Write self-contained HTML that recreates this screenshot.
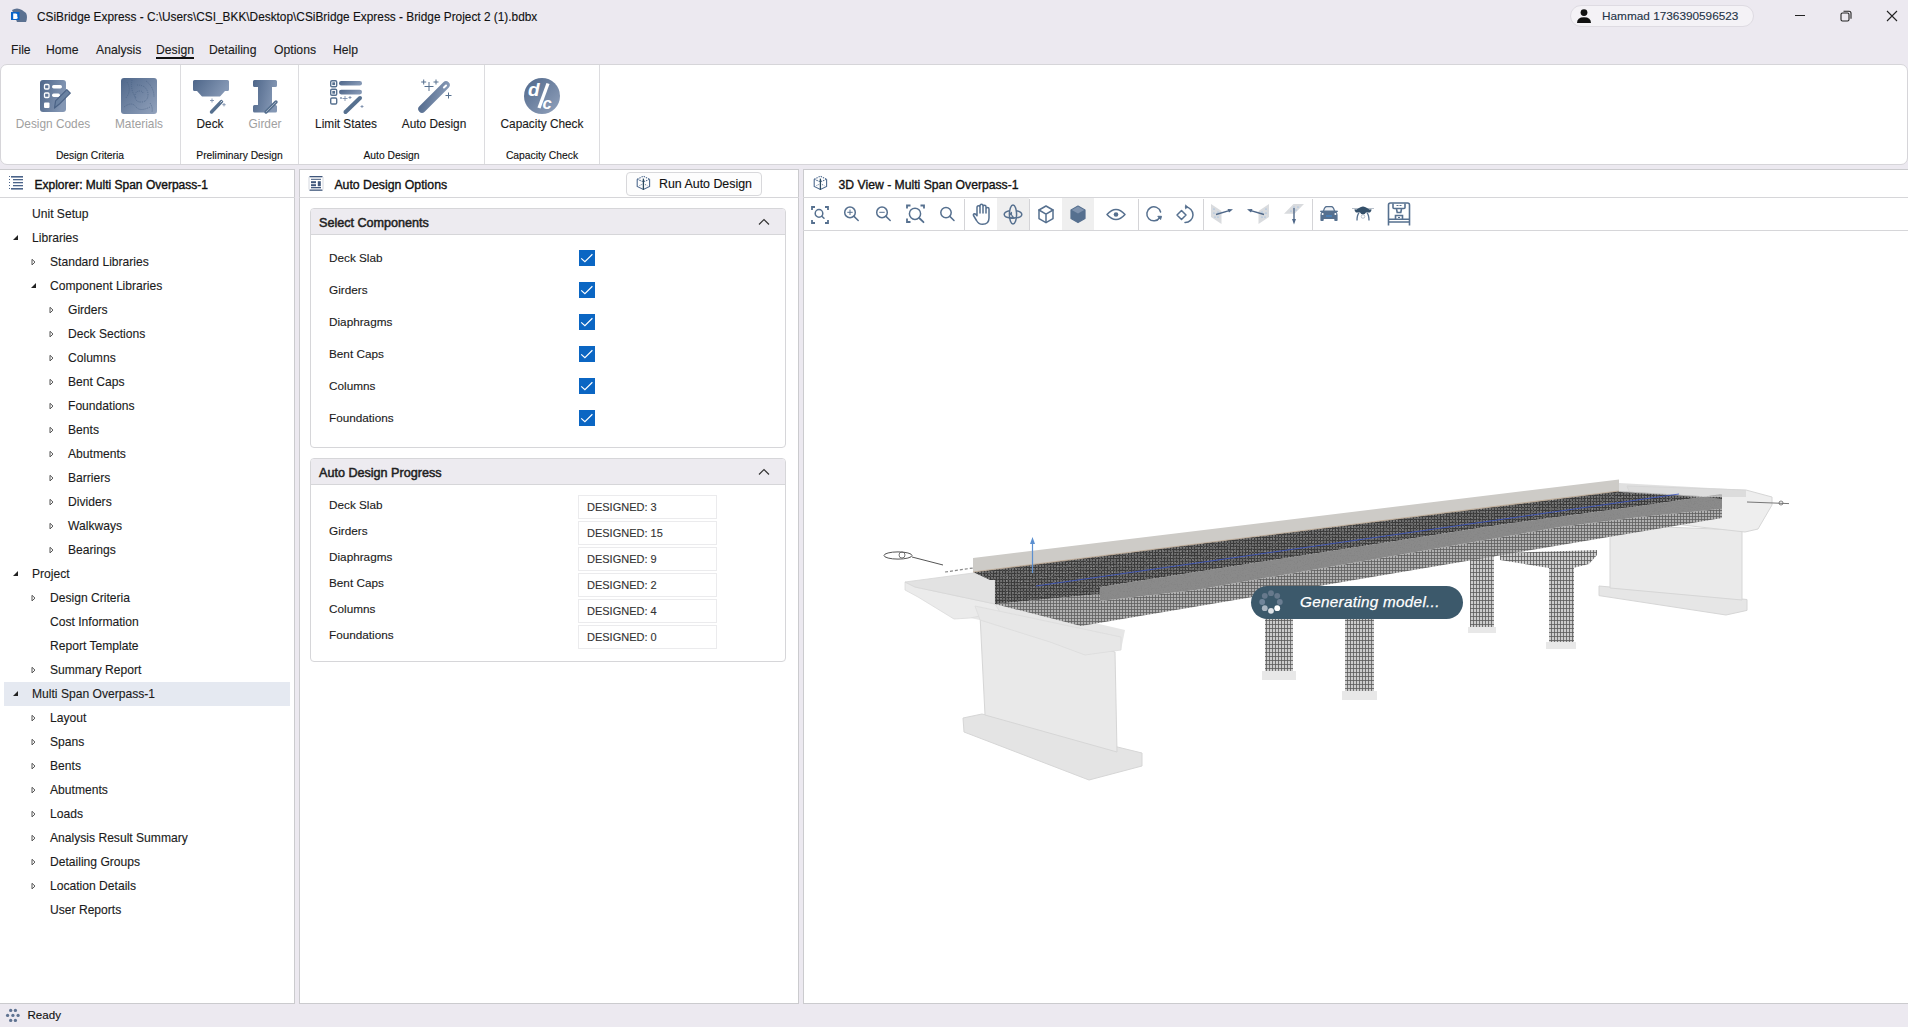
<!DOCTYPE html>
<html><head><meta charset="utf-8"><style>*{box-sizing:border-box;margin:0;padding:0}
html,body{width:1908px;height:1027px;overflow:hidden;background:#ece9f0;font-family:"Liberation Sans",sans-serif;color:#1b1b1b}
.a{position:absolute;white-space:nowrap}
svg.a{overflow:visible}</style></head><body>
<svg class="a" style="left:9px;top:7px" width="20" height="17" viewBox="0 0 20 17"><path d="M3 3 Q8 0 13 3 L17 6 Q19 10 17 15 L8 15 Z" fill="#5b7191"/>
<rect x="2" y="5" width="8.5" height="8" fill="#0a64c8"/><path d="M4.2 6.5h2.6q1.6 0 1.6 1.5q0 .8-.7 1.1q1 .3 1 1.3q0 1.6-1.8 1.6H4.2z" fill="#fff"/></svg>
<div class="a" style="left:37px;top:12.21px;font-size:11.85px;line-height:11.85px;color:#111;font-weight:normal;font-style:normal;;-webkit-text-stroke:0.12px #111">CSiBridge Express - C:\Users\CSI_BKK\Desktop\CSiBridge Express - Bridge Project 2 (1).bdbx</div>
<div class="a" style="left:1570px;top:5px;width:184px;height:22px;background:#f4f2f6;border:1px solid #dedbe2;border-radius:11px"></div>
<svg class="a" style="left:1576px;top:9px" width="16" height="14" viewBox="0 0 16 14"><circle cx="8" cy="3.6" r="3.4" fill="#111"/><path d="M1 14 Q1 8.2 8 8.2 Q15 8.2 15 14 Z" fill="#111"/></svg>
<div class="a" style="left:1602px;top:11.41px;font-size:11.8px;line-height:11.8px;color:#243447;font-weight:normal;font-style:normal;;-webkit-text-stroke:0.12px #243447">Hammad 1736390596523</div>
<div class="a" style="left:1795px;top:15px;width:10px;height:1px;background:#222"></div>
<svg class="a" style="left:1840px;top:10px" width="12" height="12" viewBox="0 0 12 12"><rect x="1" y="3" width="8" height="8" rx="1.5" fill="none" stroke="#222" stroke-width="1.1"/><path d="M3.5 1.2h5.5q2 0 2 2v5.5" fill="none" stroke="#222" stroke-width="1.1"/></svg>
<svg class="a" style="left:1886px;top:10px" width="12" height="12" viewBox="0 0 12 12"><path d="M1 1L11 11M11 1L1 11" stroke="#222" stroke-width="1.1"/></svg>
<div class="a" style="left:11px;top:44.07px;font-size:12.2px;line-height:12.2px;color:#1b1b1b;font-weight:normal;font-style:normal;;-webkit-text-stroke:0.12px #1b1b1b">File</div>
<div class="a" style="left:46px;top:44.07px;font-size:12.2px;line-height:12.2px;color:#1b1b1b;font-weight:normal;font-style:normal;;-webkit-text-stroke:0.12px #1b1b1b">Home</div>
<div class="a" style="left:96px;top:44.07px;font-size:12.2px;line-height:12.2px;color:#1b1b1b;font-weight:normal;font-style:normal;;-webkit-text-stroke:0.12px #1b1b1b">Analysis</div>
<div class="a" style="left:156px;top:44.07px;font-size:12.2px;line-height:12.2px;color:#1b1b1b;font-weight:normal;font-style:normal;;-webkit-text-stroke:0.12px #1b1b1b">Design</div>
<div class="a" style="left:209px;top:44.07px;font-size:12.2px;line-height:12.2px;color:#1b1b1b;font-weight:normal;font-style:normal;;-webkit-text-stroke:0.12px #1b1b1b">Detailing</div>
<div class="a" style="left:274px;top:44.07px;font-size:12.2px;line-height:12.2px;color:#1b1b1b;font-weight:normal;font-style:normal;;-webkit-text-stroke:0.12px #1b1b1b">Options</div>
<div class="a" style="left:333px;top:44.07px;font-size:12.2px;line-height:12.2px;color:#1b1b1b;font-weight:normal;font-style:normal;;-webkit-text-stroke:0.12px #1b1b1b">Help</div>
<div class="a" style="left:156px;top:57px;width:38px;height:2px;background:#111"></div>
<div class="a" style="left:0px;top:64px;width:1908px;height:101px;background:#fff;border:1px solid #d6d5d9;border-radius:7px"></div>
<div class="a" style="left:180px;top:65px;width:1px;height:99px;background:#dcdcdf"></div>
<div class="a" style="left:298px;top:65px;width:1px;height:99px;background:#dcdcdf"></div>
<div class="a" style="left:484px;top:65px;width:1px;height:99px;background:#dcdcdf"></div>
<div class="a" style="left:599px;top:65px;width:1px;height:99px;background:#dcdcdf"></div>
<div class="a" style="left:-97px;width:300px;text-align:center;top:119.11px;font-size:11.85px;line-height:11.85px;color:#a0a0a0;font-weight:normal;">Design Codes</div>
<div class="a" style="left:-11px;width:300px;text-align:center;top:119.11px;font-size:11.85px;line-height:11.85px;color:#a0a0a0;font-weight:normal;">Materials</div>
<div class="a" style="left:60px;width:300px;text-align:center;top:119.11px;font-size:11.85px;line-height:11.85px;color:#1b1b1b;font-weight:normal;;-webkit-text-stroke:0.12px #1b1b1b">Deck</div>
<div class="a" style="left:115px;width:300px;text-align:center;top:119.11px;font-size:11.85px;line-height:11.85px;color:#a0a0a0;font-weight:normal;">Girder</div>
<div class="a" style="left:196px;width:300px;text-align:center;top:119.11px;font-size:11.85px;line-height:11.85px;color:#1b1b1b;font-weight:normal;;-webkit-text-stroke:0.12px #1b1b1b">Limit States</div>
<div class="a" style="left:284px;width:300px;text-align:center;top:119.11px;font-size:11.85px;line-height:11.85px;color:#1b1b1b;font-weight:normal;;-webkit-text-stroke:0.12px #1b1b1b">Auto Design</div>
<div class="a" style="left:392px;width:300px;text-align:center;top:119.11px;font-size:11.85px;line-height:11.85px;color:#1b1b1b;font-weight:normal;;-webkit-text-stroke:0.12px #1b1b1b">Capacity Check</div>
<div class="a" style="left:-60px;width:300px;text-align:center;top:150.79px;font-size:10.3px;line-height:10.3px;color:#111;font-weight:normal;;-webkit-text-stroke:0.12px #111">Design Criteria</div>
<div class="a" style="left:89.5px;width:300px;text-align:center;top:150.79px;font-size:10.3px;line-height:10.3px;color:#111;font-weight:normal;;-webkit-text-stroke:0.12px #111">Preliminary Design</div>
<div class="a" style="left:241.5px;width:300px;text-align:center;top:150.79px;font-size:10.3px;line-height:10.3px;color:#111;font-weight:normal;;-webkit-text-stroke:0.12px #111">Auto Design</div>
<div class="a" style="left:392px;width:300px;text-align:center;top:150.79px;font-size:10.3px;line-height:10.3px;color:#111;font-weight:normal;;-webkit-text-stroke:0.12px #111">Capacity Check</div>
<svg class="a" style="left:0px;top:0px" width="1" height="1" viewBox="0 0 1 1"><defs><linearGradient id="g1" x1="0" y1="0" x2="1" y2="0.3"><stop offset="0" stop-color="#4e6689"/><stop offset="1" stop-color="#8497b4"/></linearGradient>
<linearGradient id="g2" x1="0" y1="0" x2="1" y2="1"><stop offset="0" stop-color="#4f678a"/><stop offset="1" stop-color="#93a3bd"/></linearGradient></defs></svg>
<svg class="a" style="left:39px;top:79px" width="33" height="35" viewBox="0 0 33 35"><rect x="1" y="1" width="26" height="32" rx="3" fill="url(#g1)"/>
<rect x="5.5" y="5.5" width="4.5" height="4.5" rx="1" fill="none" stroke="#fff" stroke-width="1.3"/>
<rect x="5.5" y="14" width="4.5" height="4.5" rx="1" fill="none" stroke="#fff" stroke-width="1.3"/>
<rect x="5" y="23.5" width="5.5" height="5.5" rx="1" fill="#fff"/>
<rect x="13" y="6" width="10" height="3.5" rx="1.7" fill="#fff"/><rect x="13" y="14.5" width="8" height="3.5" rx="1.7" fill="#fff"/>
<path d="M15.5 29 L16.6 21.8 L27.8 10.6 L31.3 14.1 L20.1 25.3 Z" fill="#6a82a2" stroke="#4a6285" stroke-width="1.2" stroke-linejoin="round"/></svg>
<svg class="a" style="left:120px;top:77px" width="38" height="38" viewBox="0 0 38 38"><rect x="1" y="1" width="36" height="36" rx="3" fill="url(#g2)"/>
<g fill="none" stroke="#4a6284" stroke-width="0.9" stroke-dasharray="1 1" opacity="0.75"><path d="M17 8 q10 0 11 9 q0 8 -7 8 q-6 0 -6 -6 q0 -5 5 -5 q3 0 3 3"/><path d="M4 30 q8 -6 12 0 q4 5 14 0"/><path d="M7 5 q5 8 -1 16"/><path d="M26 4 q8 6 8 16"/><path d="M12 3 q-2 10 4 18"/><path d="M30 26 q3 4 2 9"/></g></svg>
<svg class="a" style="left:192px;top:79px" width="38" height="36" viewBox="0 0 38 36"><path d="M1 2.5 Q1 1 2.5 1 H35.5 Q37 1 37 2.5 V10.5 Q37 12 35.5 12 H33 L28.5 17 Q28 17.5 27 17.5 H11 Q10 17.5 9.5 17 L5 12 H2.5 Q1 12 1 10.5 Z" fill="url(#g1)"/>
<path d="M19.5 33 L29.5 22.5" stroke="#56708f" stroke-width="3.4" stroke-linecap="round"/><path d="M28.5 23.5 L30.5 21.5" stroke="#fff" stroke-width="0.8"/>
<g stroke="#7d90ad" stroke-width="0.9"><path d="M20 19.5v4M18 21.5h4M32 24v3.4M30.3 25.7h3.4"/></g></svg>
<svg class="a" style="left:252px;top:79px" width="28" height="35" viewBox="0 0 28 35"><path d="M2.5 1 H23.5 Q25 1 25 2.5 V6.5 Q25 8 23.5 8 H20 V26 H23.5 Q25 26 25 27.5 V32 Q25 33.5 23.5 33.5 H2.5 Q1 33.5 1 32 V27.5 Q1 26 2.5 26 H6 V8 H2.5 Q1 8 1 6.5 V2.5 Q1 1 2.5 1 Z" fill="url(#g1)"/>
<path d="M14 33 L24 23" stroke="#56708f" stroke-width="3.4" stroke-linecap="round"/><path d="M14 33 L24 23" stroke="#fff" stroke-width="0.8" opacity="0.5"/></svg>
<svg class="a" style="left:329px;top:79px" width="35" height="37" viewBox="0 0 35 37"><g fill="none" stroke="#56708f" stroke-width="1.4"><rect x="1.7" y="1.7" width="6" height="6" rx="1.3"/><rect x="1.7" y="10.3" width="6" height="6" rx="1.3"/><rect x="1.7" y="19" width="6" height="6" rx="1.3"/></g>
<rect x="3.3" y="3.3" width="2.8" height="2.8" fill="#56708f"/><rect x="3.3" y="11.9" width="2.8" height="2.8" fill="#56708f"/>
<rect x="10" y="2" width="23" height="4.6" rx="2.3" fill="url(#g1)"/><rect x="10" y="10.8" width="23" height="4.6" rx="2.3" fill="url(#g1)"/>
<path d="M16.5 33 L31 19" stroke="#56708f" stroke-width="4" stroke-linecap="round"/>
<g stroke="#6f84a3" stroke-width="0.8"><path d="M16 17v5M13.5 19.5h5M21 17v3M19.5 18.5h3M33 26v3M31.5 27.5h3M12 18v2M11 19h2"/></g></svg>
<svg class="a" style="left:417px;top:78px" width="36" height="36" viewBox="0 0 36 36"><path d="M5 31 L29 7" stroke="url(#g1)" stroke-width="7.5" stroke-linecap="round"/>
<rect x="25.5" y="7.5" width="5" height="2" rx="1" transform="rotate(-45 28 8.5)" fill="#fff"/>
<g stroke="#56708f" stroke-width="1"><path d="M12 4v9M7.5 8.5h9M6.7 1.5v5M4.2 4h5M19 1.5v5M16.5 4h5M31.5 14.5v6M28.5 17.5h6"/></g></svg>
<svg class="a" style="left:523px;top:77px" width="38" height="38" viewBox="0 0 38 38"><circle cx="19" cy="19" r="18" fill="url(#g2)"/>
<text x="5" y="19" font-family="Liberation Sans" font-weight="bold" font-style="italic" font-size="19" fill="#fff">d</text>
<path d="M25 6.5 L16 31" stroke="#fff" stroke-width="3.3"/>
<text x="19.5" y="32" font-family="Liberation Sans" font-weight="bold" font-style="italic" font-size="16.5" fill="#fff">c</text></svg>
<div class="a" style="left:0px;top:169px;width:295px;height:835px;background:#fff;border:1px solid #cbcbce;border-left:none"></div>
<div class="a" style="left:299px;top:169px;width:500px;height:835px;background:#fff;border:1px solid #cbcbce"></div>
<div class="a" style="left:803px;top:169px;width:1110px;height:835px;background:#fff;border:1px solid #cbcbce"></div>
<div class="a" style="left:0px;top:197px;width:295px;height:1px;background:#d6d6d9"></div>
<div class="a" style="left:299px;top:197px;width:500px;height:1px;background:#d6d6d9"></div>
<div class="a" style="left:803px;top:197px;width:1110px;height:1px;background:#d6d6d9"></div>
<div class="a" style="left:803px;top:230px;width:1110px;height:1px;background:#d6d6d9"></div>
<svg class="a" style="left:8px;top:175px" width="16" height="16" viewBox="0 0 16 16"><g fill="#4b648a"><rect x="1" y="1" width="1" height="1"/><rect x="1" y="4" width="1" height="1"/><rect x="1" y="7" width="1" height="1"/><rect x="1" y="10" width="1" height="1"/><rect x="1" y="13" width="1" height="1"/><rect x="3" y="1" width="12" height="1.6"/><rect x="5" y="4" width="10" height="1.3"/><rect x="5" y="7" width="10" height="1.3"/><rect x="5" y="10" width="10" height="1.3"/><rect x="3" y="13" width="12" height="1.6"/></g></svg>
<div class="a" style="left:34.5px;top:179.19px;font-size:12px;line-height:12px;color:#111;font-weight:normal;font-style:normal;-webkit-text-stroke:0.38px #111">Explorer: Multi Span Overpass-1</div>
<div class="a" style="left:4px;top:682px;width:286px;height:24px;background:#e5e9f1"></div>
<div class="a" style="left:32px;top:208.28px;font-size:12.1px;line-height:12.1px;color:#1b1b1b;font-weight:normal;font-style:normal;;-webkit-text-stroke:0.12px #1b1b1b">Unit Setup</div>
<div class="a" style="left:32px;top:232.28px;font-size:12.1px;line-height:12.1px;color:#1b1b1b;font-weight:normal;font-style:normal;;-webkit-text-stroke:0.12px #1b1b1b">Libraries</div>
<svg class="a" style="left:13px;top:235.0px" width="6" height="6" viewBox="0 0 6 6"><path d="M5 0 L5 5 L0 5 Z" fill="#222"/></svg>
<div class="a" style="left:50px;top:256.28px;font-size:12.1px;line-height:12.1px;color:#1b1b1b;font-weight:normal;font-style:normal;;-webkit-text-stroke:0.12px #1b1b1b">Standard Libraries</div>
<svg class="a" style="left:31px;top:258.2px" width="6" height="9" viewBox="0 0 6 9"><path d="M1 1.3 L4 4.1 L1 6.9 Z" fill="none" stroke="#555" stroke-width="1" stroke-linejoin="round"/></svg>
<div class="a" style="left:50px;top:280.28px;font-size:12.1px;line-height:12.1px;color:#1b1b1b;font-weight:normal;font-style:normal;;-webkit-text-stroke:0.12px #1b1b1b">Component Libraries</div>
<svg class="a" style="left:31px;top:283.0px" width="6" height="6" viewBox="0 0 6 6"><path d="M5 0 L5 5 L0 5 Z" fill="#222"/></svg>
<div class="a" style="left:68px;top:304.28px;font-size:12.1px;line-height:12.1px;color:#1b1b1b;font-weight:normal;font-style:normal;;-webkit-text-stroke:0.12px #1b1b1b">Girders</div>
<svg class="a" style="left:49px;top:306.2px" width="6" height="9" viewBox="0 0 6 9"><path d="M1 1.3 L4 4.1 L1 6.9 Z" fill="none" stroke="#555" stroke-width="1" stroke-linejoin="round"/></svg>
<div class="a" style="left:68px;top:328.28px;font-size:12.1px;line-height:12.1px;color:#1b1b1b;font-weight:normal;font-style:normal;;-webkit-text-stroke:0.12px #1b1b1b">Deck Sections</div>
<svg class="a" style="left:49px;top:330.2px" width="6" height="9" viewBox="0 0 6 9"><path d="M1 1.3 L4 4.1 L1 6.9 Z" fill="none" stroke="#555" stroke-width="1" stroke-linejoin="round"/></svg>
<div class="a" style="left:68px;top:352.28px;font-size:12.1px;line-height:12.1px;color:#1b1b1b;font-weight:normal;font-style:normal;;-webkit-text-stroke:0.12px #1b1b1b">Columns</div>
<svg class="a" style="left:49px;top:354.2px" width="6" height="9" viewBox="0 0 6 9"><path d="M1 1.3 L4 4.1 L1 6.9 Z" fill="none" stroke="#555" stroke-width="1" stroke-linejoin="round"/></svg>
<div class="a" style="left:68px;top:376.28px;font-size:12.1px;line-height:12.1px;color:#1b1b1b;font-weight:normal;font-style:normal;;-webkit-text-stroke:0.12px #1b1b1b">Bent Caps</div>
<svg class="a" style="left:49px;top:378.2px" width="6" height="9" viewBox="0 0 6 9"><path d="M1 1.3 L4 4.1 L1 6.9 Z" fill="none" stroke="#555" stroke-width="1" stroke-linejoin="round"/></svg>
<div class="a" style="left:68px;top:400.28px;font-size:12.1px;line-height:12.1px;color:#1b1b1b;font-weight:normal;font-style:normal;;-webkit-text-stroke:0.12px #1b1b1b">Foundations</div>
<svg class="a" style="left:49px;top:402.2px" width="6" height="9" viewBox="0 0 6 9"><path d="M1 1.3 L4 4.1 L1 6.9 Z" fill="none" stroke="#555" stroke-width="1" stroke-linejoin="round"/></svg>
<div class="a" style="left:68px;top:424.28px;font-size:12.1px;line-height:12.1px;color:#1b1b1b;font-weight:normal;font-style:normal;;-webkit-text-stroke:0.12px #1b1b1b">Bents</div>
<svg class="a" style="left:49px;top:426.2px" width="6" height="9" viewBox="0 0 6 9"><path d="M1 1.3 L4 4.1 L1 6.9 Z" fill="none" stroke="#555" stroke-width="1" stroke-linejoin="round"/></svg>
<div class="a" style="left:68px;top:448.28px;font-size:12.1px;line-height:12.1px;color:#1b1b1b;font-weight:normal;font-style:normal;;-webkit-text-stroke:0.12px #1b1b1b">Abutments</div>
<svg class="a" style="left:49px;top:450.2px" width="6" height="9" viewBox="0 0 6 9"><path d="M1 1.3 L4 4.1 L1 6.9 Z" fill="none" stroke="#555" stroke-width="1" stroke-linejoin="round"/></svg>
<div class="a" style="left:68px;top:472.28px;font-size:12.1px;line-height:12.1px;color:#1b1b1b;font-weight:normal;font-style:normal;;-webkit-text-stroke:0.12px #1b1b1b">Barriers</div>
<svg class="a" style="left:49px;top:474.2px" width="6" height="9" viewBox="0 0 6 9"><path d="M1 1.3 L4 4.1 L1 6.9 Z" fill="none" stroke="#555" stroke-width="1" stroke-linejoin="round"/></svg>
<div class="a" style="left:68px;top:496.28px;font-size:12.1px;line-height:12.1px;color:#1b1b1b;font-weight:normal;font-style:normal;;-webkit-text-stroke:0.12px #1b1b1b">Dividers</div>
<svg class="a" style="left:49px;top:498.2px" width="6" height="9" viewBox="0 0 6 9"><path d="M1 1.3 L4 4.1 L1 6.9 Z" fill="none" stroke="#555" stroke-width="1" stroke-linejoin="round"/></svg>
<div class="a" style="left:68px;top:520.28px;font-size:12.1px;line-height:12.1px;color:#1b1b1b;font-weight:normal;font-style:normal;;-webkit-text-stroke:0.12px #1b1b1b">Walkways</div>
<svg class="a" style="left:49px;top:522.2px" width="6" height="9" viewBox="0 0 6 9"><path d="M1 1.3 L4 4.1 L1 6.9 Z" fill="none" stroke="#555" stroke-width="1" stroke-linejoin="round"/></svg>
<div class="a" style="left:68px;top:544.28px;font-size:12.1px;line-height:12.1px;color:#1b1b1b;font-weight:normal;font-style:normal;;-webkit-text-stroke:0.12px #1b1b1b">Bearings</div>
<svg class="a" style="left:49px;top:546.2px" width="6" height="9" viewBox="0 0 6 9"><path d="M1 1.3 L4 4.1 L1 6.9 Z" fill="none" stroke="#555" stroke-width="1" stroke-linejoin="round"/></svg>
<div class="a" style="left:32px;top:568.28px;font-size:12.1px;line-height:12.1px;color:#1b1b1b;font-weight:normal;font-style:normal;;-webkit-text-stroke:0.12px #1b1b1b">Project</div>
<svg class="a" style="left:13px;top:571.0px" width="6" height="6" viewBox="0 0 6 6"><path d="M5 0 L5 5 L0 5 Z" fill="#222"/></svg>
<div class="a" style="left:50px;top:592.28px;font-size:12.1px;line-height:12.1px;color:#1b1b1b;font-weight:normal;font-style:normal;;-webkit-text-stroke:0.12px #1b1b1b">Design Criteria</div>
<svg class="a" style="left:31px;top:594.2px" width="6" height="9" viewBox="0 0 6 9"><path d="M1 1.3 L4 4.1 L1 6.9 Z" fill="none" stroke="#555" stroke-width="1" stroke-linejoin="round"/></svg>
<div class="a" style="left:50px;top:616.28px;font-size:12.1px;line-height:12.1px;color:#1b1b1b;font-weight:normal;font-style:normal;;-webkit-text-stroke:0.12px #1b1b1b">Cost Information</div>
<div class="a" style="left:50px;top:640.28px;font-size:12.1px;line-height:12.1px;color:#1b1b1b;font-weight:normal;font-style:normal;;-webkit-text-stroke:0.12px #1b1b1b">Report Template</div>
<div class="a" style="left:50px;top:664.28px;font-size:12.1px;line-height:12.1px;color:#1b1b1b;font-weight:normal;font-style:normal;;-webkit-text-stroke:0.12px #1b1b1b">Summary Report</div>
<svg class="a" style="left:31px;top:666.2px" width="6" height="9" viewBox="0 0 6 9"><path d="M1 1.3 L4 4.1 L1 6.9 Z" fill="none" stroke="#555" stroke-width="1" stroke-linejoin="round"/></svg>
<div class="a" style="left:32px;top:688.28px;font-size:12.1px;line-height:12.1px;color:#1b1b1b;font-weight:normal;font-style:normal;;-webkit-text-stroke:0.12px #1b1b1b">Multi Span Overpass-1</div>
<svg class="a" style="left:13px;top:691.0px" width="6" height="6" viewBox="0 0 6 6"><path d="M5 0 L5 5 L0 5 Z" fill="#222"/></svg>
<div class="a" style="left:50px;top:712.28px;font-size:12.1px;line-height:12.1px;color:#1b1b1b;font-weight:normal;font-style:normal;;-webkit-text-stroke:0.12px #1b1b1b">Layout</div>
<svg class="a" style="left:31px;top:714.2px" width="6" height="9" viewBox="0 0 6 9"><path d="M1 1.3 L4 4.1 L1 6.9 Z" fill="none" stroke="#555" stroke-width="1" stroke-linejoin="round"/></svg>
<div class="a" style="left:50px;top:736.28px;font-size:12.1px;line-height:12.1px;color:#1b1b1b;font-weight:normal;font-style:normal;;-webkit-text-stroke:0.12px #1b1b1b">Spans</div>
<svg class="a" style="left:31px;top:738.2px" width="6" height="9" viewBox="0 0 6 9"><path d="M1 1.3 L4 4.1 L1 6.9 Z" fill="none" stroke="#555" stroke-width="1" stroke-linejoin="round"/></svg>
<div class="a" style="left:50px;top:760.28px;font-size:12.1px;line-height:12.1px;color:#1b1b1b;font-weight:normal;font-style:normal;;-webkit-text-stroke:0.12px #1b1b1b">Bents</div>
<svg class="a" style="left:31px;top:762.2px" width="6" height="9" viewBox="0 0 6 9"><path d="M1 1.3 L4 4.1 L1 6.9 Z" fill="none" stroke="#555" stroke-width="1" stroke-linejoin="round"/></svg>
<div class="a" style="left:50px;top:784.28px;font-size:12.1px;line-height:12.1px;color:#1b1b1b;font-weight:normal;font-style:normal;;-webkit-text-stroke:0.12px #1b1b1b">Abutments</div>
<svg class="a" style="left:31px;top:786.2px" width="6" height="9" viewBox="0 0 6 9"><path d="M1 1.3 L4 4.1 L1 6.9 Z" fill="none" stroke="#555" stroke-width="1" stroke-linejoin="round"/></svg>
<div class="a" style="left:50px;top:808.28px;font-size:12.1px;line-height:12.1px;color:#1b1b1b;font-weight:normal;font-style:normal;;-webkit-text-stroke:0.12px #1b1b1b">Loads</div>
<svg class="a" style="left:31px;top:810.2px" width="6" height="9" viewBox="0 0 6 9"><path d="M1 1.3 L4 4.1 L1 6.9 Z" fill="none" stroke="#555" stroke-width="1" stroke-linejoin="round"/></svg>
<div class="a" style="left:50px;top:832.28px;font-size:12.1px;line-height:12.1px;color:#1b1b1b;font-weight:normal;font-style:normal;;-webkit-text-stroke:0.12px #1b1b1b">Analysis Result Summary</div>
<svg class="a" style="left:31px;top:834.2px" width="6" height="9" viewBox="0 0 6 9"><path d="M1 1.3 L4 4.1 L1 6.9 Z" fill="none" stroke="#555" stroke-width="1" stroke-linejoin="round"/></svg>
<div class="a" style="left:50px;top:856.28px;font-size:12.1px;line-height:12.1px;color:#1b1b1b;font-weight:normal;font-style:normal;;-webkit-text-stroke:0.12px #1b1b1b">Detailing Groups</div>
<svg class="a" style="left:31px;top:858.2px" width="6" height="9" viewBox="0 0 6 9"><path d="M1 1.3 L4 4.1 L1 6.9 Z" fill="none" stroke="#555" stroke-width="1" stroke-linejoin="round"/></svg>
<div class="a" style="left:50px;top:880.28px;font-size:12.1px;line-height:12.1px;color:#1b1b1b;font-weight:normal;font-style:normal;;-webkit-text-stroke:0.12px #1b1b1b">Location Details</div>
<svg class="a" style="left:31px;top:882.2px" width="6" height="9" viewBox="0 0 6 9"><path d="M1 1.3 L4 4.1 L1 6.9 Z" fill="none" stroke="#555" stroke-width="1" stroke-linejoin="round"/></svg>
<div class="a" style="left:50px;top:904.28px;font-size:12.1px;line-height:12.1px;color:#1b1b1b;font-weight:normal;font-style:normal;;-webkit-text-stroke:0.12px #1b1b1b">User Reports</div>
<svg class="a" style="left:0px;top:1000px" width="24" height="24" viewBox="0 0 24 24"><g fill="#5f7391"><circle cx="10.7" cy="10.4" r="1.65"/><circle cx="15.4" cy="10.4" r="1.65"/><circle cx="7.6" cy="15.4" r="1.65"/><circle cx="12.9" cy="15.4" r="1.65"/><circle cx="18.1" cy="15.4" r="1.65"/><circle cx="10.7" cy="20.4" r="1.65"/><circle cx="15.4" cy="20.4" r="1.65"/></g></svg>
<div class="a" style="left:27.5px;top:1008.64px;font-size:11.6px;line-height:11.6px;color:#111;font-weight:normal;font-style:normal;;-webkit-text-stroke:0.12px #111">Ready</div>
<svg class="a" style="left:308px;top:175px" width="16" height="17" viewBox="0 0 16 17"><g fill="#40577c"><rect x="1.5" y="1" width="13" height="1.3"/><rect x="1.5" y="14.5" width="13" height="1.3"/><rect x="3" y="3.8" width="10" height="1"/><rect x="3" y="6.2" width="5" height="2"/><rect x="3" y="9.2" width="5" height="2"/><rect x="9.8" y="6.2" width="3" height="5"/><rect x="3" y="12" width="10" height="1.3"/></g><path d="M1 2v12.5M15 2v12.5" stroke="#c9ced8" stroke-width="0.8"/></svg>
<div class="a" style="left:334.4px;top:179.15px;font-size:12.3px;line-height:12.3px;color:#111;font-weight:normal;font-style:normal;-webkit-text-stroke:0.35px #111">Auto Design Options</div>
<div class="a" style="left:626px;top:172px;width:136px;height:24px;background:#fdfdfd;border:1px solid #d8d8db;border-radius:4px"></div>
<svg class="a" style="left:636px;top:175px" width="15" height="16" viewBox="0 0 15 16"><g fill="none" stroke="#4e6a8e" stroke-width="1.1"><path d="M1.2 4.2 V11.5 L7.4 14.5 L13.6 11.5 V4.2"/><path d="M1.2 4.2 L7.4 1.2 L13.6 4.2 M1.2 4.2 L7.4 6.8 L13.6 4.2" stroke-dasharray="1.4 1"/><path d="M3.5 10.5 L7.4 8.8 L11.3 10.5" stroke-dasharray="1 1" stroke-width="0.9"/></g><path d="M7.4 3.6 V14.8" stroke="#2b4a5e" stroke-width="1.3"/></svg>
<div class="a" style="left:659px;top:177.74px;font-size:12.4px;line-height:12.4px;color:#111;font-weight:normal;font-style:normal;;-webkit-text-stroke:0.12px #111">Run Auto Design</div>
<div class="a" style="left:310px;top:208px;width:476px;height:240px;background:#fff;border:1px solid #d6d6d9;border-radius:4px"></div>
<div class="a" style="left:311px;top:209px;width:474px;height:26px;background:#edebf0;border-bottom:1px solid #d6d6d9;border-radius:3px 3px 0 0"></div>
<div class="a" style="left:319px;top:216.72px;font-size:12.6px;line-height:12.6px;color:#222;font-weight:normal;font-style:normal;-webkit-text-stroke:0.5px #222">Select Components</div>
<svg class="a" style="left:758px;top:218px" width="12" height="8" viewBox="0 0 12 8"><path d="M1 6.5 L6 1.5 L11 6.5" fill="none" stroke="#333" stroke-width="1.2"/></svg>
<div class="a" style="left:329px;top:252.12px;font-size:11.75px;line-height:11.75px;color:#1b1b1b;font-weight:normal;font-style:normal;;-webkit-text-stroke:0.12px #1b1b1b">Deck Slab</div>
<div class="a" style="left:579px;top:250px;width:16px;height:16px;background:#0b66c3"></div>
<svg class="a" style="left:579px;top:250px" width="16" height="16" viewBox="0 0 16 16"><path d="M2.2 8.4 L5.9 11.6 L13.4 4.3" fill="none" stroke="#fff" stroke-width="1.2"/></svg>
<div class="a" style="left:329px;top:284.12px;font-size:11.75px;line-height:11.75px;color:#1b1b1b;font-weight:normal;font-style:normal;;-webkit-text-stroke:0.12px #1b1b1b">Girders</div>
<div class="a" style="left:579px;top:282px;width:16px;height:16px;background:#0b66c3"></div>
<svg class="a" style="left:579px;top:282px" width="16" height="16" viewBox="0 0 16 16"><path d="M2.2 8.4 L5.9 11.6 L13.4 4.3" fill="none" stroke="#fff" stroke-width="1.2"/></svg>
<div class="a" style="left:329px;top:316.12px;font-size:11.75px;line-height:11.75px;color:#1b1b1b;font-weight:normal;font-style:normal;;-webkit-text-stroke:0.12px #1b1b1b">Diaphragms</div>
<div class="a" style="left:579px;top:314px;width:16px;height:16px;background:#0b66c3"></div>
<svg class="a" style="left:579px;top:314px" width="16" height="16" viewBox="0 0 16 16"><path d="M2.2 8.4 L5.9 11.6 L13.4 4.3" fill="none" stroke="#fff" stroke-width="1.2"/></svg>
<div class="a" style="left:329px;top:348.12px;font-size:11.75px;line-height:11.75px;color:#1b1b1b;font-weight:normal;font-style:normal;;-webkit-text-stroke:0.12px #1b1b1b">Bent Caps</div>
<div class="a" style="left:579px;top:346px;width:16px;height:16px;background:#0b66c3"></div>
<svg class="a" style="left:579px;top:346px" width="16" height="16" viewBox="0 0 16 16"><path d="M2.2 8.4 L5.9 11.6 L13.4 4.3" fill="none" stroke="#fff" stroke-width="1.2"/></svg>
<div class="a" style="left:329px;top:380.12px;font-size:11.75px;line-height:11.75px;color:#1b1b1b;font-weight:normal;font-style:normal;;-webkit-text-stroke:0.12px #1b1b1b">Columns</div>
<div class="a" style="left:579px;top:378px;width:16px;height:16px;background:#0b66c3"></div>
<svg class="a" style="left:579px;top:378px" width="16" height="16" viewBox="0 0 16 16"><path d="M2.2 8.4 L5.9 11.6 L13.4 4.3" fill="none" stroke="#fff" stroke-width="1.2"/></svg>
<div class="a" style="left:329px;top:412.12px;font-size:11.75px;line-height:11.75px;color:#1b1b1b;font-weight:normal;font-style:normal;;-webkit-text-stroke:0.12px #1b1b1b">Foundations</div>
<div class="a" style="left:579px;top:410px;width:16px;height:16px;background:#0b66c3"></div>
<svg class="a" style="left:579px;top:410px" width="16" height="16" viewBox="0 0 16 16"><path d="M2.2 8.4 L5.9 11.6 L13.4 4.3" fill="none" stroke="#fff" stroke-width="1.2"/></svg>
<div class="a" style="left:310px;top:458px;width:476px;height:204px;background:#fff;border:1px solid #d6d6d9;border-radius:4px"></div>
<div class="a" style="left:311px;top:459px;width:474px;height:26px;background:#edebf0;border-bottom:1px solid #d6d6d9;border-radius:3px 3px 0 0"></div>
<div class="a" style="left:319px;top:466.72px;font-size:12.6px;line-height:12.6px;color:#222;font-weight:normal;font-style:normal;-webkit-text-stroke:0.5px #222">Auto Design Progress</div>
<svg class="a" style="left:758px;top:468px" width="12" height="8" viewBox="0 0 12 8"><path d="M1 6.5 L6 1.5 L11 6.5" fill="none" stroke="#333" stroke-width="1.2"/></svg>
<div class="a" style="left:329px;top:498.62px;font-size:11.75px;line-height:11.75px;color:#1b1b1b;font-weight:normal;font-style:normal;;-webkit-text-stroke:0.12px #1b1b1b">Deck Slab</div>
<div class="a" style="left:578px;top:495px;width:139px;height:24px;background:#fff;border:1px solid #ebebed"></div>
<div class="a" style="left:587px;top:502.41px;font-size:11.0px;line-height:11.0px;color:#333;font-weight:normal;font-style:normal;;-webkit-text-stroke:0.12px #333">DESIGNED: 3</div>
<div class="a" style="left:329px;top:524.62px;font-size:11.75px;line-height:11.75px;color:#1b1b1b;font-weight:normal;font-style:normal;;-webkit-text-stroke:0.12px #1b1b1b">Girders</div>
<div class="a" style="left:578px;top:521px;width:139px;height:24px;background:#fff;border:1px solid #ebebed"></div>
<div class="a" style="left:587px;top:528.41px;font-size:11.0px;line-height:11.0px;color:#333;font-weight:normal;font-style:normal;;-webkit-text-stroke:0.12px #333">DESIGNED: 15</div>
<div class="a" style="left:329px;top:550.62px;font-size:11.75px;line-height:11.75px;color:#1b1b1b;font-weight:normal;font-style:normal;;-webkit-text-stroke:0.12px #1b1b1b">Diaphragms</div>
<div class="a" style="left:578px;top:547px;width:139px;height:24px;background:#fff;border:1px solid #ebebed"></div>
<div class="a" style="left:587px;top:554.41px;font-size:11.0px;line-height:11.0px;color:#333;font-weight:normal;font-style:normal;;-webkit-text-stroke:0.12px #333">DESIGNED: 9</div>
<div class="a" style="left:329px;top:576.62px;font-size:11.75px;line-height:11.75px;color:#1b1b1b;font-weight:normal;font-style:normal;;-webkit-text-stroke:0.12px #1b1b1b">Bent Caps</div>
<div class="a" style="left:578px;top:573px;width:139px;height:24px;background:#fff;border:1px solid #ebebed"></div>
<div class="a" style="left:587px;top:580.41px;font-size:11.0px;line-height:11.0px;color:#333;font-weight:normal;font-style:normal;;-webkit-text-stroke:0.12px #333">DESIGNED: 2</div>
<div class="a" style="left:329px;top:602.62px;font-size:11.75px;line-height:11.75px;color:#1b1b1b;font-weight:normal;font-style:normal;;-webkit-text-stroke:0.12px #1b1b1b">Columns</div>
<div class="a" style="left:578px;top:599px;width:139px;height:24px;background:#fff;border:1px solid #ebebed"></div>
<div class="a" style="left:587px;top:606.41px;font-size:11.0px;line-height:11.0px;color:#333;font-weight:normal;font-style:normal;;-webkit-text-stroke:0.12px #333">DESIGNED: 4</div>
<div class="a" style="left:329px;top:628.62px;font-size:11.75px;line-height:11.75px;color:#1b1b1b;font-weight:normal;font-style:normal;;-webkit-text-stroke:0.12px #1b1b1b">Foundations</div>
<div class="a" style="left:578px;top:625px;width:139px;height:24px;background:#fff;border:1px solid #ebebed"></div>
<div class="a" style="left:587px;top:632.41px;font-size:11.0px;line-height:11.0px;color:#333;font-weight:normal;font-style:normal;;-webkit-text-stroke:0.12px #333">DESIGNED: 0</div>
<svg class="a" style="left:813px;top:175px" width="15" height="16" viewBox="0 0 15 16"><g fill="none" stroke="#4e6a8e" stroke-width="1.1"><path d="M1.2 4.2 V11.5 L7.4 14.5 L13.6 11.5 V4.2"/><path d="M1.2 4.2 L7.4 1.2 L13.6 4.2 M1.2 4.2 L7.4 6.8 L13.6 4.2" stroke-dasharray="1.4 1"/><path d="M3.5 10.5 L7.4 8.8 L11.3 10.5" stroke-dasharray="1 1" stroke-width="0.9"/></g><path d="M7.4 3.6 V14.8" stroke="#2b4a5e" stroke-width="1.3"/></svg>
<div class="a" style="left:838.6px;top:178.97px;font-size:12.2px;line-height:12.2px;color:#111;font-weight:normal;font-style:normal;-webkit-text-stroke:0.35px #111">3D View - Multi Span Overpass-1</div>
<div class="a" style="left:964px;top:199px;width:1px;height:31px;background:#d4d4d7"></div>
<div class="a" style="left:1029px;top:199px;width:1px;height:31px;background:#d4d4d7"></div>
<div class="a" style="left:1138px;top:199px;width:1px;height:31px;background:#d4d4d7"></div>
<div class="a" style="left:1203px;top:199px;width:1px;height:31px;background:#d4d4d7"></div>
<div class="a" style="left:1312px;top:199px;width:1px;height:31px;background:#d4d4d7"></div>
<div class="a" style="left:997px;top:198px;width:32px;height:32px;background:#efefef"></div>
<div class="a" style="left:1062px;top:198px;width:32px;height:32px;background:#efefef"></div>
<svg class="a" style="left:810px;top:205px" width="20" height="20" viewBox="0 0 20 20"><g stroke="#56708f" stroke-width="1.5" fill="none" stroke-linecap="round"><path d="M2 5V2h3M15 2h3v3M18 15v3h-3M5 18H2v-3" stroke-width="1.8" stroke-linecap="butt"/><circle cx="9" cy="8.4" r="3.8"/><path d="M11.8 11.2 L14 13.3"/></g></svg>
<svg class="a" style="left:842px;top:203px" width="20" height="20" viewBox="0 0 20 20"><g stroke="#56708f" stroke-width="1.5" fill="none" stroke-linecap="round"><circle cx="8" cy="9.4" r="5.3"/><path d="M12 13.4 L16.2 17.5"/><path d="M8 7v4.6M5.7 9.3h4.6" stroke-width="1"/></g></svg>
<svg class="a" style="left:874px;top:203px" width="20" height="20" viewBox="0 0 20 20"><g stroke="#56708f" stroke-width="1.5" fill="none" stroke-linecap="round"><circle cx="8" cy="9.4" r="5.3"/><path d="M12 13.4 L16.2 17.5"/><path d="M5.7 9.3h4.6" stroke-width="1"/></g></svg>
<svg class="a" style="left:905px;top:203px" width="22" height="22" viewBox="0 0 22 22"><g stroke="#56708f" stroke-width="1.5" fill="none" stroke-linecap="round"><path d="M2 5.5V2.5h3.5M15.5 2.5H19v3M2 15.5V19h3.5" stroke-width="1.8" stroke-linecap="butt"/><circle cx="10" cy="10.8" r="5.6"/><path d="M14.2 15 L18.5 19.2" stroke-width="1.8"/></g></svg>
<svg class="a" style="left:937px;top:203px" width="20" height="20" viewBox="0 0 20 20"><g stroke="#56708f" stroke-width="1.5" fill="none" stroke-linecap="round"><circle cx="9" cy="9.6" r="5.2"/><path d="M12.8 13.4 L17 17.5"/></g></svg>
<svg class="a" style="left:972px;top:203px" width="19" height="23" viewBox="0 0 19 23"><path d="M5 12 V4.5 Q5 2.8 6.5 2.8 Q8 2.8 8 4.5 V10 V3 Q8 1.3 9.5 1.3 Q11 1.3 11 3 V10 V3.8 Q11 2.2 12.5 2.2 Q14 2.2 14 3.8 V10 V6 Q14 4.5 15.5 4.5 Q17 4.5 17 6 V15 Q17 21.3 10.5 21.3 Q6.5 21.3 4.5 17.5 L1.5 12.5 Q1 11 2.5 10.8 Q3.8 10.8 5 12.8 Z" stroke="#56708f" stroke-width="1.5" fill="none" stroke-linecap="round" stroke-width="1.4" stroke-linejoin="round"/></svg>
<svg class="a" style="left:1003px;top:204px" width="21" height="21" viewBox="0 0 21 21"><g stroke="#56708f" stroke-width="1.5" fill="none" stroke-linecap="round" stroke-width="1.4"><ellipse cx="10" cy="10.5" rx="3.6" ry="9.4"/><path d="M6.5 6.8 Q1.2 8 1.2 10.5 Q1.2 14 10 14 Q18.8 14 18.8 10.5 Q18.8 8 13.5 6.8"/><path d="M7.8 14.2 L10.6 14 L9.2 12"/><path d="M8.3 8.5 L8.3 10.6 L6.6 9.6" /></g></svg>
<svg class="a" style="left:1036px;top:204px" width="20" height="21" viewBox="0 0 20 21"><g stroke="#56708f" stroke-width="1.5" fill="none" stroke-linecap="round" stroke-width="1.5" stroke-linejoin="round"><path d="M10 2 L17 6 V14.6 L10 18.6 L3 14.6 V6 Z"/><path d="M3 6 L10 10.2 L17 6 M10 10.2 V18.6"/></g></svg>
<svg class="a" style="left:1068px;top:204px" width="20" height="21" viewBox="0 0 20 21"><path d="M10 2 L17 6 V14.6 L10 18.6 L3 14.6 V6 Z" fill="#56708f" stroke="#56708f" stroke-width="1.2" stroke-linejoin="round"/><path d="M3.8 6 L10 9.6 L16.2 6 L10 2.6 Z" fill="#7f93ae"/></svg>
<svg class="a" style="left:1105px;top:206px" width="22" height="17" viewBox="0 0 22 17"><path d="M2 8.5 Q11 -1.5 20 8.5 Q11 18.5 2 8.5 Z" stroke="#56708f" stroke-width="1.5" fill="none" stroke-linecap="round" stroke-width="1.6" stroke-linejoin="round"/><circle cx="11" cy="8.5" r="2.3" fill="#56708f"/></svg>
<svg class="a" style="left:1145px;top:205px" width="20" height="20" viewBox="0 0 20 20"><path d="M14.8 12.5 A7 7 0 1 1 15.6 7" stroke="#56708f" stroke-width="1.5" fill="none" stroke-linecap="round" stroke-width="1.5"/><path d="M12.8 11.3 L16.5 11.3 L15.6 14.5 Z" fill="#56708f" stroke="#56708f" stroke-width="1"/></svg>
<svg class="a" style="left:1175px;top:203px" width="24" height="23" viewBox="0 0 24 23"><path d="M2 12 L6.5 7.5 L11 12 L6.5 16.5 Z" stroke="#56708f" stroke-width="1.5" fill="none" stroke-linecap="round" stroke-width="1.5" stroke-linejoin="round"/><path d="M10.5 4 A7.6 7.6 0 1 1 10 19.5" stroke="#56708f" stroke-width="1.5" fill="none" stroke-linecap="round" stroke-width="1.5"/><path d="M10.2 1.2 L13.3 4 L10.2 6.5 Z" fill="#56708f"/></svg>
<svg class="a" style="left:1209px;top:202px" width="26" height="24" viewBox="0 0 26 24"><path d="M2 2 L12.5 9 V22 L2 15 Z" fill="#d9dbde"/><g fill="#7fb0e0"><circle cx="5" cy="7" r=".6"/><circle cx="9" cy="10" r=".6"/><circle cx="5" cy="11" r=".6"/><circle cx="9" cy="15" r=".6"/><circle cx="6" cy="15" r=".6"/></g><path d="M7 12.5 L21 8.3" stroke="#4e6788" stroke-width="1.4"/><path d="M18.5 7 L24 7.3 L20 10.5 Z" fill="#4e6788"/></svg>
<svg class="a" style="left:1245px;top:202px" width="26" height="24" viewBox="0 0 26 24"><path d="M24 2 L13.5 9 V22 L24 15 Z" fill="#d9dbde"/><g fill="#7fb0e0"><circle cx="21" cy="7" r=".6"/><circle cx="17" cy="10" r=".6"/><circle cx="21" cy="11" r=".6"/><circle cx="17" cy="15" r=".6"/><circle cx="20" cy="15" r=".6"/></g><path d="M19 12.5 L5 8.3" stroke="#4e6788" stroke-width="1.4"/><path d="M7.5 7 L2 7.3 L6 10.5 Z" fill="#4e6788"/></svg>
<svg class="a" style="left:1282px;top:202px" width="24" height="24" viewBox="0 0 24 24"><path d="M11.5 2 L22 2 L12.5 11.8 L2 11.8 Z" fill="#d9dbde"/><g fill="#7fb0e0"><circle cx="12" cy="5" r=".6"/><circle cx="16" cy="5" r=".6"/><circle cx="9" cy="9" r=".6"/><circle cx="14" cy="8" r=".6"/></g><path d="M12 6 V19" stroke="#4e6788" stroke-width="1.4"/><path d="M10 17 L12 22.5 L14 17 Z" fill="#4e6788"/></svg>
<svg class="a" style="left:1319px;top:205px" width="20" height="17" viewBox="0 0 20 17"><path d="M4 5.5 Q5 1.5 7 1 H13 Q15 1.5 16 5.5 L18.8 5.8 V7 L17.6 7.3 Q18.6 8.5 18.6 10 V15.2 Q18.6 16 17.8 16 H16 Q15.3 16 15.3 15 V14 H4.7 V15 Q4.7 16 4 16 H2.2 Q1.4 16 1.4 15.2 V10 Q1.4 8.5 2.4 7.3 L1.2 7 V5.8 Z" fill="#56708f"/><path d="M5.2 5.5 Q6 2.6 7.5 2.3 H12.5 Q14 2.6 14.8 5.5 Z" fill="#eef1f5"/><g fill="#3d8ee0"><circle cx="8" cy="11" r=".8"/><circle cx="10" cy="11" r=".8"/><circle cx="12" cy="11" r=".8"/></g><circle cx="3.6" cy="9" r="1" fill="#fff"/><circle cx="16.4" cy="9" r="1" fill="#fff"/></svg>
<svg class="a" style="left:1351px;top:206px" width="24" height="16" viewBox="0 0 24 16"><path d="M1 2.5 H9 M15 2.5 H23" stroke="#9aa5b3" stroke-width="0.7"/><path d="M3.5 3.2 Q3.5 6 5 6.5 L9 6.5 Q10 8.5 12 8.5 Q14 8.5 15 6.5 L19 6.5 Q20.5 6 20.5 3.2 L18.5 3.6 Q14 0.5 12 0.5 Q10 0.5 5.5 3.6 Z" fill="#34506a"/><path d="M8 7 Q6 9 6 14.5 M16 7 Q18 9 18 14.5" stroke="#56708f" stroke-width="1.3" fill="none"/><circle cx="12" cy="10.5" r="1.8" fill="none" stroke="#aab4c0" stroke-width="0.8"/></svg>
<svg class="a" style="left:1386px;top:201px" width="26" height="26" viewBox="0 0 26 26"><g fill="none" stroke="#56708f" stroke-width="1.6"><path d="M2.5 24.5 V4 Q2.5 2 4.5 2 H21.5 Q23.5 2 23.5 4 V24.5"/><path d="M2.5 18.3 H23.5 M2.5 21 H23.5"/><path d="M7 2.5 V6.5 Q7 7.5 8 7.5 H18 Q19 7.5 19 6.5 V2.5"/><path d="M10.5 8 L11.2 11.5 H14.8 L15.5 8"/><path d="M9.5 18 V14.5 H16.5 V18"/></g><g fill="#56708f"><rect x="10.5" y="4" width="2" height="1"/><rect x="13.5" y="4" width="2" height="1"/><rect x="12" y="16" width="2" height="1"/></g></svg>
<svg class="a" style="left:804px;top:231px" width="1104" height="772" viewBox="804 231 1104 772"><defs>
<pattern id="mD" width="3" height="3" patternUnits="userSpaceOnUse"><rect width="3" height="3" fill="#6a6a6a"/><path d="M0 .5H3M.5 0V3" stroke="#3a3a3a" stroke-width="1"/></pattern>
<pattern id="mM" width="3" height="3" patternUnits="userSpaceOnUse"><rect width="3" height="3" fill="#9a9a9a"/><path d="M0 .5H3M.5 0V3" stroke="#5e5e5e" stroke-width="1"/></pattern>
<pattern id="mL" width="3" height="3" patternUnits="userSpaceOnUse"><rect width="3" height="3" fill="#b0b0b0"/><path d="M0 .5H3M.5 0V3" stroke="#5e5e5e" stroke-width="0.8"/></pattern>
<pattern id="mC" width="3" height="4" patternUnits="userSpaceOnUse"><rect width="3" height="4" fill="#cccccc"/><path d="M0 .5H3M.5 0V4" stroke="#5a5a5a" stroke-width="0.8"/></pattern>
<filter id="nzW" x="0" y="0" width="1" height="1" filterUnits="objectBoundingBox"><feTurbulence type="fractalNoise" baseFrequency="0.8" numOctaves="2" seed="7" result="t"/><feColorMatrix in="t" type="matrix" values="0 0 0 0 1  0 0 0 0 1  0 0 0 0 1  3 0 0 0 -1.55" result="w"/><feComposite in="w" in2="SourceGraphic" operator="in"/></filter>
<filter id="nzK" x="0" y="0" width="1" height="1" filterUnits="objectBoundingBox"><feTurbulence type="fractalNoise" baseFrequency="0.7" numOctaves="2" seed="3" result="t"/><feColorMatrix in="t" type="matrix" values="0 0 0 0 0.2  0 0 0 0 0.2  0 0 0 0 0.2  3 0 0 0 -1.5" result="w"/><feComposite in="w" in2="SourceGraphic" operator="in"/></filter>
</defs><polygon points="1599,586 1747,599.5 1747,610.4 1726,615 1599,595.6" fill="#e6e6e6" stroke="#d6d6d6" stroke-width="1"/><polygon points="1610,525 1742,530 1742,600 1610,588" fill="#eaeaea" stroke="#d6d6d6" stroke-width="1"/><polygon points="1627,486 1746,490 1772,497 1772,505 1758,529 1745,532 1700,527 1640,520" fill="#eeeeee" stroke="#d6d6d6" stroke-width="1"/><polygon points="1500,553 1597,550 1597,555 1589,564 1573,568 1549,568 1500,560" fill="url(#mC)" /><polygon points="1470,556 1494,556 1494,627 1470,627" fill="url(#mC)" /><polygon points="1468,627 1496,627 1496,633 1468,633" fill="#e8e8e8" /><polygon points="1549,562 1574,562 1574,642 1549,642" fill="url(#mC)" /><polygon points="1546,642 1576,642 1576,649 1546,649" fill="#e8e8e8" /><polygon points="1265,612 1293,612 1293,671 1265,671" fill="url(#mC)" /><polygon points="1262,671 1296,671 1296,680 1262,680" fill="#e8e8e8" /><polygon points="1345,615 1374,615 1374,691 1345,691" fill="url(#mC)" /><polygon points="1342,691 1377,691 1377,700 1342,700" fill="#e8e8e8" /><polygon points="963,718 982,714 1142,753 1142,766 1089,780 964,732" fill="#e4e4e4" stroke="#d6d6d6" stroke-width="1"/><polygon points="980,615 1115,652 1117,752 985,715" fill="#e9e9e9" stroke="#d6d6d6" stroke-width="1"/><polygon points="995,600 1125,630 1121,650 980,620 970,618" fill="#e6e6e6" /><polygon points="905,590 905,582 915,587 995,604 1000,612 970,618 954,619 918,597" fill="#ebebeb" stroke="#dadada" stroke-width="0.8"/><polygon points="905,582 973,573 995,579 995,604 915,587" fill="#e2e2e2" stroke="#d6d6d6" stroke-width="0.8"/><polygon points="975,606 1121,637 1121,650 1085,655 1050,642 980,620" fill="#e7e7e7" stroke="#dcdcdc" stroke-width="0.8"/><polygon points="995,604 1081,626 1722,518 1722,508.8 1640,517 1560,527 1196,590 1100,601 1100,594" fill="url(#mL)" /><polygon points="1100,587 1260,562 1500,524.7 1640,506 1722,494 1722,508.8 1640,517 1560,527 1196,590 1100,601" fill="#8a8a8a" /><polygon points="973,572 1619,491 1700,496 1722,499 1722,494 1640,506 1500,524.7 1260,562 1100,587 1100,594 995,604 995,580 990,580" fill="url(#mD)" /><polygon points="973,558 1619,479.5 1619,491 973,572" fill="#cdcbc7" /><path d="M973 572 L1619 491" stroke="#b9a590" stroke-width="1.2" opacity="0.8"/><polygon points="973,572 1619,491 1700,496 1722,499 1722,494 1640,506 1500,524.7 1260,562 1100,587 1100,594 995,604 995,580 990,580" fill="#fff" filter="url(#nzW)" opacity="0.3"/><polygon points="1100,587 1260,562 1500,524.7 1640,506 1722,494 1722,508.8 1640,517 1560,527 1196,590 1100,601" fill="#000" filter="url(#nzK)" opacity="0.5"/><polygon points="1619,483 1746,490 1746,497 1700,497 1619,492" fill="#d6d6d6" opacity="0.75"/><path d="M1036 586 L1679 494" stroke="#3a55c8" stroke-width="1" opacity="0.8"/><path d="M1032.5 573 V541" stroke="#5b8fd0" stroke-width="1.2"/><path d="M1030 544 L1032.5 537 L1035 544 Z" fill="#5b8fd0"/><ellipse cx="898" cy="555.5" rx="14" ry="3.6" fill="none" stroke="#555" stroke-width="1"/><circle cx="902" cy="555" r="3" fill="none" stroke="#555" stroke-width=".8"/><path d="M912 557 L943 565" stroke="#555" stroke-width="1"/><path d="M945 572 L973 568" stroke="#888" stroke-width="1.2" stroke-dasharray="3 2"/><path d="M1747 502 L1789 503.6" stroke="#777" stroke-width="1"/><circle cx="1781" cy="503" r="2" fill="none" stroke="#666" stroke-width=".8"/></svg>
<div class="a" style="left:1251px;top:586px;width:212px;height:33px;background:#3c596b;border-radius:16.5px"></div>
<svg class="a" style="left:1259px;top:590px" width="24" height="24" viewBox="0 0 24 24"><circle cx="18.22" cy="18.22" r="2.9" fill="#ffffff"/><circle cx="12.00" cy="20.80" r="2.9" fill="#dfe3e8"/><circle cx="5.78" cy="18.22" r="2.9" fill="#a9b5c1"/><circle cx="3.20" cy="12.00" r="2.9" fill="#71859a"/><circle cx="5.78" cy="5.78" r="2.9" fill="#67798c"/><circle cx="12.00" cy="3.20" r="2.9" fill="#67798c"/><circle cx="18.22" cy="5.78" r="2.9" fill="#67798c"/><circle cx="20.80" cy="12.00" r="2.9" fill="#6b7e92"/></svg>
<div class="a" style="left:1300px;top:594.20px;font-size:15.3px;line-height:15.3px;color:#ffffff;font-weight:normal;font-style:italic;letter-spacing:0.28px;-webkit-text-stroke:0.25px #fff">Generating model...</div>
</body></html>
